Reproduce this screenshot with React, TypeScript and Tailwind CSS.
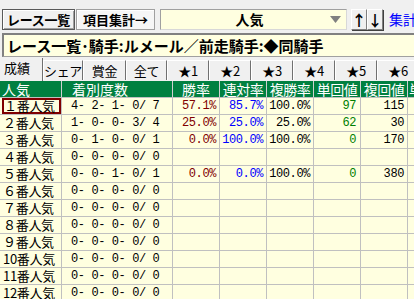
import { clsx } from 'clsx';

type Row = {
  label: string;
  rec: string;
  win?: string;
  ren?: string;
  fuku?: string;
  tan?: string;
  fukuv?: string;
};

const rows: Row[] = [
  { label: '１番人気', rec: '4- 2- 1- 0/ 7', win: '57.1%', ren: '85.7%', fuku: '100.0%', tan: '97', fukuv: '115' },
  { label: '２番人気', rec: '1- 0- 0- 3/ 4', win: '25.0%', ren: '25.0%', fuku: '25.0%', tan: '62', fukuv: '30' },
  { label: '３番人気', rec: '0- 1- 0- 0/ 1', win: '0.0%', ren: '100.0%', fuku: '100.0%', tan: '0', fukuv: '170' },
  { label: '４番人気', rec: '0- 0- 0- 0/ 0' },
  { label: '５番人気', rec: '0- 0- 1- 0/ 1', win: '0.0%', ren: '0.0%', fuku: '100.0%', tan: '0', fukuv: '380' },
  { label: '６番人気', rec: '0- 0- 0- 0/ 0' },
  { label: '７番人気', rec: '0- 0- 0- 0/ 0' },
  { label: '８番人気', rec: '0- 0- 0- 0/ 0' },
  { label: '９番人気', rec: '0- 0- 0- 0/ 0' },
  { label: '10番人気', rec: '0- 0- 0- 0/ 0' },
  { label: '11番人気', rec: '0- 0- 0- 0/ 0' },
  { label: '12番人気', rec: '0- 0- 0- 0/ 0' }
];

const tabs = [
  { label: 'シェア', w: 'w-[40px]' },
  { label: '賞金', w: 'w-[43px]' },
  { label: '全て', w: 'w-[41px]' },
  { label: '★1', w: 'w-[42px]' },
  { label: '★2', w: 'w-[42px]' },
  { label: '★3', w: 'w-[42px]' },
  { label: '★4', w: 'w-[42px]' },
  { label: '★5', w: 'w-[42px]' },
  { label: '★6', w: 'w-[42px]' }
];

const mono = "font-['Liberation_Mono',monospace] text-[12px] tracking-[-0.4px] whitespace-pre";
const cell = 'h-full border-r border-[#c0c0c0] shrink-0';
const head = 'h-full shrink-0 border-r border-[#d0d0d0]';
const raised = 'border border-t-white border-l-white border-r-[#808080] border-b-[#808080] shadow-[1px_1px_0_#404040]';

export default function App() {
  return (
    <div className="w-[414px] h-[299px] overflow-hidden bg-[#f0f0f0] font-['Noto_Sans_CJK_JP',sans-serif] text-black">
      {/* toolbar */}
      <div className="flex items-center h-[22px] mt-[8px] pl-[2px] whitespace-nowrap">
        <div className="w-[73px] h-[21px] shrink-0 flex items-center justify-center border border-[#5a5a5a] bg-[#f0f0f0] shadow-[inset_1px_1px_0_#fff,inset_-1px_-1px_0_#a0a0a0] text-[13px] font-bold tracking-[-0.3px] leading-none">
          レース一覧
        </div>
        <div className="w-[79px] h-[21px] shrink-0 ml-[1px] flex items-center justify-center border border-[#a0a0a0] bg-[#f6f6f6] shadow-[inset_1px_1px_0_#fff] text-[13px] font-bold leading-none">
          項目集計→
        </div>
        <div className="w-[187px] h-[21px] shrink-0 ml-[5px] flex items-center border border-t-[#a0a0a0] border-l-[#a0a0a0] border-r-[#d8d8d8] border-b-[#d8d8d8] bg-[#ffffe0]">
          <span className="flex-1 text-center text-[14px] font-bold leading-none pl-[8px]">人気</span>
          <svg width="11" height="7" viewBox="0 0 11 7" className="mr-[5px] shrink-0">
            <polygon points="0,0 11,0 5.5,7" fill="#808080" />
          </svg>
        </div>
        <div className={clsx('w-[16px] h-[21px] shrink-0 ml-[4px] flex items-center justify-center bg-[#f0f0f0] text-[15px] font-bold leading-none', raised)}>↑</div>
        <div className={clsx('w-[16px] h-[21px] shrink-0 flex items-center justify-center bg-[#f0f0f0] text-[15px] font-bold leading-none', raised)}>↓</div>
        <span className="ml-[6px] shrink-0 text-[14px] text-[#0000ff] leading-none">集計項目</span>
      </div>

      {/* title */}
      <div className="mt-[3px] ml-[2px] h-[24px] flex items-center border-t-2 border-l-2 border-b border-t-[#808080] border-l-[#808080] border-b-[#a0a0a0] bg-[#ffffe0] pl-[3px] whitespace-nowrap">
        <span className="text-[15px] font-bold leading-none">レース一覧･騎手:ルメール／前走騎手:◆同騎手</span>
      </div>

      {/* tabs */}
      <div className="flex items-end h-[24px] whitespace-nowrap">
        <div className="w-[43px] h-[23px] shrink-0 flex items-start pl-[4px] pt-[2px] text-[13px] leading-[15px] border-r border-[#707070]">
          成績
        </div>
        {tabs.map((tab) => (
          <div
            key={tab.label}
            className={clsx(
              tab.w,
              'h-[20px] mb-[1px] shrink-0 flex items-center justify-center text-[13px] tracking-[-0.3px] leading-none border-t border-l border-r border-t-white border-l-white border-r-[#707070]'
            )}
          >
            {tab.label}
          </div>
        ))}
      </div>

      {/* header */}
      <div className="flex h-[17px] bg-[#008040] text-white text-[14px] leading-[16px] border-b border-[#c0c0c0] whitespace-nowrap">
        <div className={clsx(head, 'w-[62px] pl-[2px]')}>人気</div>
        <div className={clsx(head, 'w-[111px] pl-[10px]')}>着別度数</div>
        <div className={clsx(head, 'w-[47px] text-center')}>勝率</div>
        <div className={clsx(head, 'w-[47px] text-center tracking-[-0.5px]')}>連対率</div>
        <div className={clsx(head, 'w-[47px] text-center tracking-[-0.5px]')}>複勝率</div>
        <div className={clsx(head, 'w-[47px] text-center tracking-[-0.5px]')}>単回値</div>
        <div className={clsx(head, 'w-[47px] text-center tracking-[-0.5px]')}>複回値</div>
        <div className="flex-1 pl-[1px]">単</div>
      </div>

      {/* rows */}
      {rows.map((row, i) => (
        <div key={row.label} className="flex h-[17px] bg-[#ffffe0] border-b border-[#c0c0c0] leading-[16px] whitespace-nowrap">
          <div className={clsx(cell, 'w-[62px]')}>
            <div
              className={clsx(
                'h-full text-[13px] tracking-[-0.3px]',
                i === 0 ? 'ml-[2px] pl-[2px] shadow-[inset_0_0_0_2px_#800000]' : 'pl-[3px]'
              )}
            >
              {row.label}
            </div>
          </div>
          <div className={clsx(cell, 'w-[111px] pl-[9px]', mono)}>{row.rec}</div>
          <div className={clsx(cell, 'w-[47px] text-right pr-[3px] text-[#800000]', mono)}>{row.win}</div>
          <div className={clsx(cell, 'w-[47px] text-right pr-[3px] text-[#0000ff]', mono)}>{row.ren}</div>
          <div className={clsx(cell, 'w-[47px] text-right pr-[3px]', mono)}>{row.fuku}</div>
          <div className={clsx(cell, 'w-[47px] text-right pr-[4px] text-[#008000]', mono)}>{row.tan}</div>
          <div className={clsx(cell, 'w-[47px] text-right pr-[3px]', mono)}>{row.fukuv}</div>
          <div className="flex-1" />
        </div>
      ))}
    </div>
  );
}
